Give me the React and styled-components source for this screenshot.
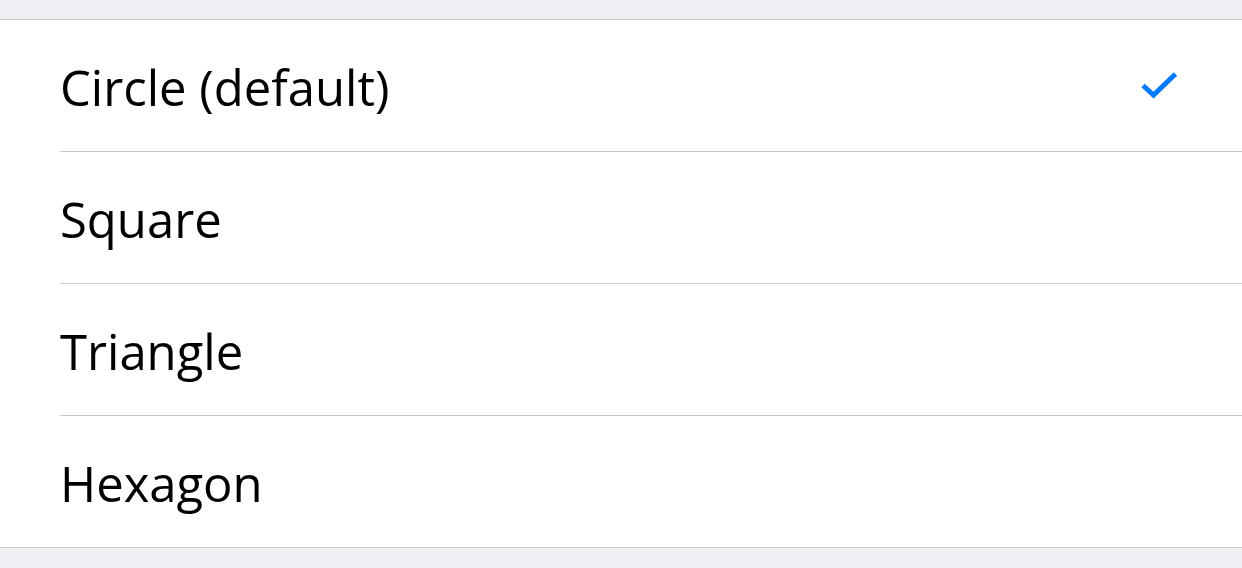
import { useState } from "react";
import styled, { createGlobalStyle } from "styled-components";

const GlobalStyle = createGlobalStyle`
    html, body {
        margin: 0;
        padding: 0;
        background-color: #EFEFF4;
    }
    body {
        font-family: 'Open Sans', 'Noto Sans', sans-serif;
    }
`;

const shapes = ["Circle (default)", "Square", "Triangle", "Hexagon"];

export default function App() {
    const [selected, setSelected] = useState(0);

    return (
        <>
            <GlobalStyle />
            <Page>
                <List>
                    {shapes.map((shape, i) => (
                        <Row key={shape} onClick={() => setSelected(i)}>
                            <RowInner last={i === shapes.length - 1}>
                                <Label>{shape}</Label>
                                {selected === i && <Check />}
                            </RowInner>
                        </Row>
                    ))}
                </List>
            </Page>
        </>
    );
}

function Check() {
    return (
        <CheckIcon viewBox="0 0 40 28" width="40" height="28">
            <path
                d="M3 14.5 L13.5 24 L35.5 3"
                fill="none"
                stroke="#007AFF"
                strokeWidth="5"
                strokeLinecap="butt"
                strokeLinejoin="miter"
            />
        </CheckIcon>
    );
}

const Page = styled.div`
    width: 1242px;
    height: 568px;
    padding-top: 19px;
    box-sizing: border-box;
    background-color: #EFEFF4;
`;
const List = styled.div`
    background-color: #FFFFFF;
    border-top: 1px solid #C8C7CC;
    border-bottom: 1px solid #C8C7CC;
`;
const Row = styled.div`
    padding-left: 60px;
    cursor: pointer;
`;
const RowInner = styled.div`
    height: 131px;
    display: flex;
    align-items: center;
    justify-content: space-between;
    padding-right: 62px;
    border-bottom: ${({ last }) => (last ? "none" : "1px solid #C8C7CC")};
`;
const Label = styled.div`
    font-family: 'Open Sans', 'Noto Sans', sans-serif;
    font-weight: 400;
    font-size: 49px;
    line-height: 1;
    color: #000000;
    padding-top: 4px;
`;
const CheckIcon = styled.svg`
    display: block;
    margin-bottom: 2px;
`;
